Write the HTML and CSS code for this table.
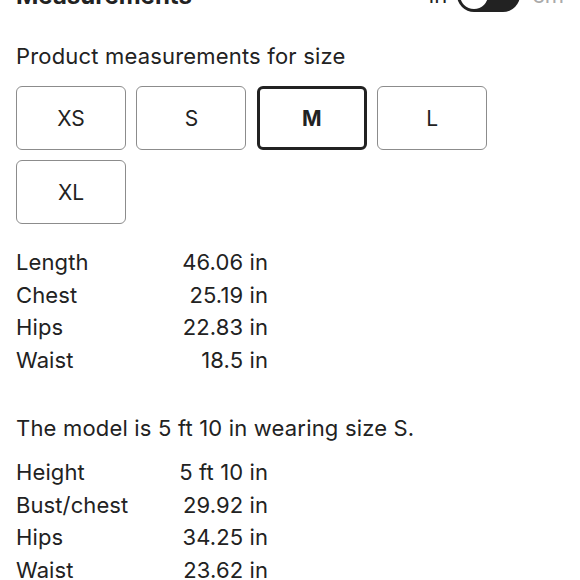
FILE: index.html
```html
<!DOCTYPE html>
<html>
<head>
<meta charset="utf-8">
<link rel="stylesheet" href="styles.css">
</head>
<body>
<div class="page">
  <header class="head">
    <h2 class="title">Measurements</h2>
    <div class="units">
      <span class="unit">in</span>
      <span class="toggle"><span class="knob"></span></span>
      <span class="unit off">cm</span>
    </div>
  </header>

  <p class="lead">Product measurements for size</p>

  <div class="sizes">
    <button class="size">XS</button>
    <button class="size">S</button>
    <button class="size active">M</button>
    <button class="size">L</button>
    <button class="size">XL</button>
  </div>

  <dl class="table">
    <dt>Length</dt><dd>46.06 in</dd>
    <dt>Chest</dt><dd>25.19 in</dd>
    <dt>Hips</dt><dd>22.83 in</dd>
    <dt>Waist</dt><dd>18.5 in</dd>
  </dl>

  <p class="lead model">The model is 5 ft 10 in wearing size S.</p>

  <dl class="table">
    <dt>Height</dt><dd>5 ft 10 in</dd>
    <dt>Bust/chest</dt><dd>29.92 in</dd>
    <dt>Hips</dt><dd>34.25 in</dd>
    <dt>Waist</dt><dd>23.62 in</dd>
  </dl>
</div>
</body>
</html>
```

FILE: styles.css
```css
html, body {
  margin: 0;
  padding: 0;
  background: #fff;
}
body {
  font-family: Inter, "Noto Sans", sans-serif;
  color: #222;
  overflow: hidden;
}
.page {
  padding: 0 16px;
}
.head {
  display: flex;
  align-items: center;
  justify-content: space-between;
  height: 40px;
  margin-top: -25px;
}
.title {
  margin: 0;
  font-size: 24px;
  font-weight: 700;
}
.units {
  display: flex;
  align-items: center;
  gap: 10px;
}
.unit {
  font-size: 22px;
  color: #222;
}
.unit.off {
  color: #aaa;
  margin-left: 2px;
}
.toggle {
  display: flex;
  align-items: center;
  width: 63px;
  height: 34px;
  border-radius: 17px;
  background: #222;
  padding: 3px;
  box-sizing: border-box;
}
.knob {
  width: 28px;
  height: 28px;
  border-radius: 50%;
  background: #fff;
}
.lead {
  margin: 28px 0 0;
  font-size: 22px;
  line-height: 26px;
  letter-spacing: 0.18px;
}
.sizes {
  display: grid;
  grid-template-columns: repeat(4, 110px);
  column-gap: 10.4px;
  row-gap: 10px;
  margin-top: 17px;
}
.size {
  box-sizing: border-box;
  height: 64px;
  border: 1.5px solid #8c8c8c;
  border-radius: 6px;
  background: #fff;
  font-family: Inter, "Noto Sans", sans-serif;
  font-size: 21px;
  color: #222;
  padding: 0;
}
.size.active {
  border: 3px solid #222;
  font-weight: 700;
}
.table {
  display: grid;
  grid-template-columns: 150px 102px;
  margin: 22px 0 0;
  font-size: 22px;
  line-height: 32.5px;
  letter-spacing: 0.1px;
}
.table dt {
  margin: 0;
}
.table dd {
  margin: 0;
  text-align: right;
}
.model {
  margin-top: 39px;
}
.model + .table {
  margin-top: 15px;
}
```
